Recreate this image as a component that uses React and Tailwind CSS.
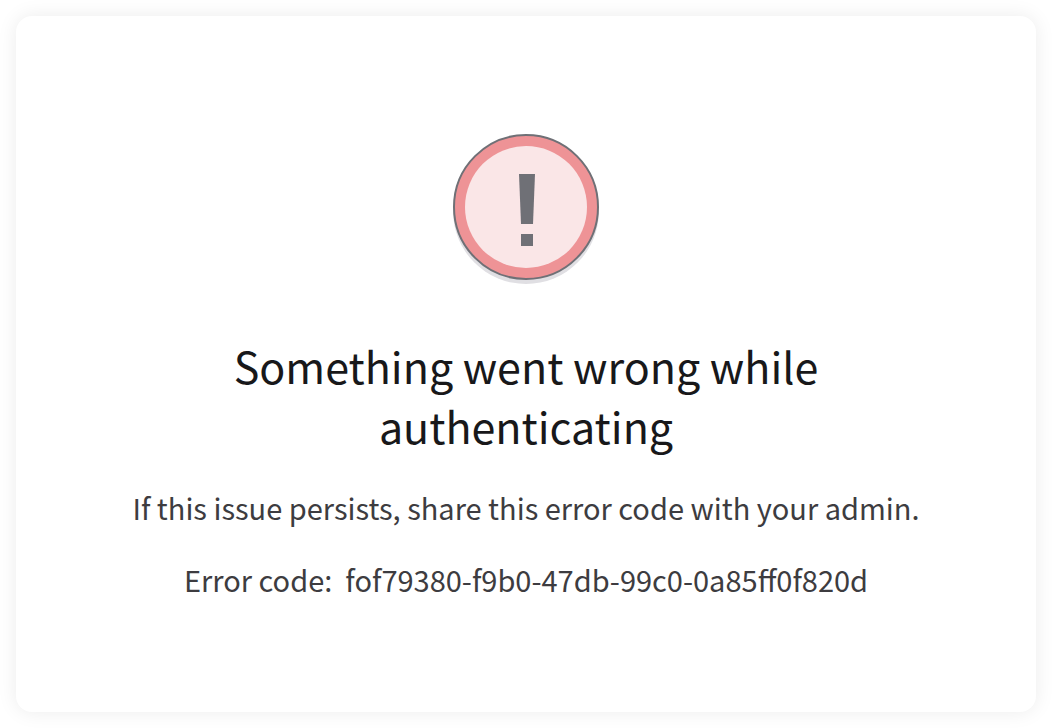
import React from 'react';

const ErrorIcon = () => (
  <svg width="150" height="152" viewBox="0 0 150 152" fill="none" aria-hidden="true">
    <circle cx="75" cy="79" r="73" fill="#e0dfe3" />
    <circle cx="75" cy="75" r="72" fill="#ee9396" stroke="#6f7076" strokeWidth="2" />
    <circle cx="75" cy="75" r="61" fill="#fae6e7" />
    <path d="M68 42h16l-2 50H70z" fill="#6f7076" />
    <path d="M70 102h12v12H70z" fill="#6f7076" />
  </svg>
);

const AuthError = ({ errorCode }) => (
  <main className="flex min-h-screen bg-white p-4 font-['Noto_Sans_CJK_SC','Noto_Sans',sans-serif]">
    <section className="flex flex-1 flex-col items-center rounded-2xl bg-white px-16 pt-[116px] pb-24 text-center shadow-[0_0_20px_rgba(0,0,0,0.08)]">
      <ErrorIcon />
      <h1 className="mt-[51px] max-w-[640px] text-[43px] leading-[60px] text-[#18181a]">
        Something went wrong while authenticating
      </h1>
      <p className="mt-8 text-[29px] leading-10 text-[#3d3c40]">
        If this issue persists, share this error code with your admin.
      </p>
      <p className="mt-8 text-[29px] leading-10 text-[#3d3c40]">
        Error code:&nbsp; {errorCode}
      </p>
    </section>
  </main>
);

const App = () => <AuthError errorCode="fof79380-f9b0-47db-99c0-0a85ff0f820d" />;

export default App;
